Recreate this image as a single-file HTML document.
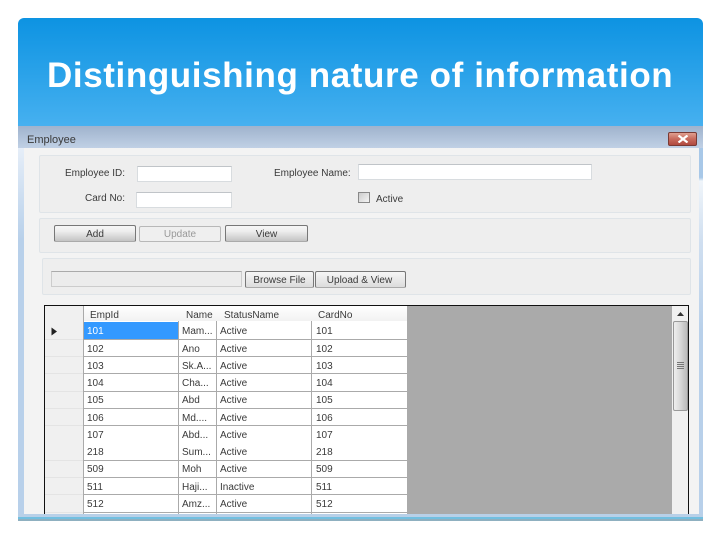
<!DOCTYPE html>
<html><head><meta charset="utf-8"><style>
html,body{margin:0;padding:0;background:#fff}
body{width:720px;height:540px;position:relative;overflow:hidden;font-family:"Liberation Sans",sans-serif}
div{position:absolute;box-sizing:border-box}
.t{font-size:10px;line-height:12px;color:#3a3a3a;white-space:nowrap;filter:blur(.35px)}
.p{background:#eee;border:1px solid #dfe4e8;border-radius:2px}
.i{background:#fff;border:1px solid #d8dcdf;border-top-color:#c0c4c8}
.b{height:17px;border:1px solid #777;border-bottom-color:#aaa;border-radius:2px;background:linear-gradient(#f6f6f6,#eee 35%,#c4c4c4);text-align:center;font-size:10px;line-height:17px;color:#3a3a3a}
.h{background:#aaa;height:1px}
.v{background:#aaa;width:1px}
</style></head><body>
<div style="left:18px;top:18px;width:685px;height:110px;border-radius:6px 6px 0 0;background:linear-gradient(#0d93e2,#47b1f0)"></div>
<div style="left:18px;top:126px;width:685px;height:22px;background:linear-gradient(#9fb3cd,#c0d0e5)"></div>
<div style="left:18px;top:148px;width:6px;height:368px;background:linear-gradient(#e6eef8,#c4d8ee 18%,#b8d0ea 25%,#b8d0ea)"></div>
<div style="left:699px;top:148px;width:4px;height:368px;background:linear-gradient(#a8c8e8,#a8c8e8 8%,#f0f5fa 9%,#d0dff0 25%,#b8d0ea 50%,#b8d0ea)"></div>
<div style="left:24px;top:148px;width:675px;height:368px;background:#f3f3f3"></div>
<div style="left:18px;top:514px;width:685px;height:3px;background:#b8d0e8"></div>
<div style="left:18px;top:517px;width:685px;height:2px;background:#72bfe0"></div>
<div style="left:18px;top:519px;width:685px;height:2px;background:#8fb0c0"></div>

<div style="left:47px;top:55px;width:640px;font-family:'Liberation Sans',sans-serif;font-weight:bold;font-size:35px;line-height:42px;color:#fff;white-space:nowrap;letter-spacing:.6px;filter:blur(.25px)">Distinguishing nature of information</div>

<div class="t" style="left:27px;top:134px;font-size:11px">Employee</div>
<div style="left:668px;top:132px;width:29px;height:14px;border:1px solid #7a3a34;border-radius:2px;background:linear-gradient(#e0a090,#c86a5c 50%,#b04a40)"></div>
<svg style="position:absolute;left:677px;top:135px" width="12" height="8"><path d="M1.5 .5 L10.5 7.5 M10.5 .5 L1.5 7.5" stroke="#fff" stroke-width="2.2"/></svg>

<div class="p" style="left:39px;top:155px;width:652px;height:58px"></div>
<div class="p" style="left:39px;top:218px;width:652px;height:35px"></div>
<div class="p" style="left:42px;top:258px;width:649px;height:37px"></div>

<div class="t" style="left:65px;top:168px">Employee ID:</div>
<div class="i" style="left:137px;top:166px;width:95px;height:16px"></div>
<div class="t" style="left:274px;top:168px">Employee Name:</div>
<div class="i" style="left:358px;top:164px;width:234px;height:16px"></div>
<div class="t" style="left:85px;top:193px">Card No:</div>
<div class="i" style="left:136px;top:192px;width:96px;height:16px"></div>
<div style="left:358px;top:192px;width:12px;height:11px;border:1px solid #888;background:linear-gradient(135deg,#ccc,#f4f4f4)"></div>
<div class="t" style="left:376px;top:194px">Active</div>

<div class="b" style="left:54px;top:225px;width:82px">Add</div>
<div class="b" style="left:139px;top:226px;width:82px;height:16px;background:#efefef;border-color:#b8b8b8;color:#999;line-height:16px">Update</div>
<div class="b" style="left:225px;top:225px;width:83px">View</div>

<div style="left:51px;top:271px;width:191px;height:16px;background:#ececec;border:1px solid #ccc;border-top-color:#aaa"></div>
<div class="b" style="left:245px;top:271px;width:69px;background:linear-gradient(#f6f6f6,#dcdcdc)">Browse File</div>
<div class="b" style="left:315px;top:271px;width:91px;padding-right:2px;background:linear-gradient(#f6f6f6,#dcdcdc)">Upload &amp; View</div>

<!-- grid -->
<div style="left:44px;top:305px;width:645px;height:209px;background:#f0f0f0;border:1px solid #111;border-bottom:0;border-width:1px 1px 0 1px"></div>
<div style="left:83px;top:306px;width:324px;height:15px;background:linear-gradient(#fff,#f2f2f2)"></div>
<div style="left:83px;top:321px;width:324px;height:193px;background:#fff"></div>
<div style="left:84px;top:322px;width:94px;height:17px;background:#3399ff"></div>
<div style="left:407px;top:306px;width:265px;height:208px;background:#aaa"></div>

<div class="h" style="left:45px;top:339px;width:362px;background:#e4e4e4"></div>
<div class="h" style="left:45px;top:356px;width:362px;background:#e4e4e4"></div>
<div class="h" style="left:45px;top:373px;width:362px;background:#e4e4e4"></div>
<div class="h" style="left:45px;top:391px;width:362px;background:#e4e4e4"></div>
<div class="h" style="left:45px;top:408px;width:362px;background:#e4e4e4"></div>
<div class="h" style="left:45px;top:425px;width:362px;background:#e4e4e4"></div>
<div class="h" style="left:45px;top:460px;width:362px;background:#e4e4e4"></div>
<div class="h" style="left:45px;top:477px;width:362px;background:#e4e4e4"></div>
<div class="h" style="left:45px;top:494px;width:362px;background:#e4e4e4"></div>
<div class="h" style="left:45px;top:512px;width:362px;background:#e4e4e4"></div>

<div class="h" style="left:83px;top:339px;width:324px"></div>
<div class="h" style="left:83px;top:356px;width:324px"></div>
<div class="h" style="left:83px;top:373px;width:324px"></div>
<div class="h" style="left:83px;top:391px;width:324px"></div>
<div class="h" style="left:83px;top:408px;width:324px"></div>
<div class="h" style="left:83px;top:425px;width:324px"></div>
<div class="h" style="left:83px;top:460px;width:324px"></div>
<div class="h" style="left:83px;top:477px;width:324px"></div>
<div class="h" style="left:83px;top:494px;width:324px"></div>
<div class="h" style="left:83px;top:512px;width:324px"></div>

<div class="v" style="left:83px;top:306px;height:208px"></div>
<div class="v" style="left:178px;top:321px;height:193px"></div>
<div class="v" style="left:216px;top:321px;height:193px"></div>
<div class="v" style="left:311px;top:321px;height:193px"></div>

<div class="t" style="left:90px;top:310px">EmpId</div>
<div class="t" style="left:186px;top:310px">Name</div>
<div class="t" style="left:224px;top:310px">StatusName</div>
<div class="t" style="left:318px;top:310px">CardNo</div>

<svg style="position:absolute;left:51px;top:327px" width="7" height="9"><path d="M0.5 0.5 L6 4.5 L0.5 8.5 Z" fill="#222"/></svg>

<div class="t" style="left:87px;top:326px;color:#fff">101</div><div class="t" style="left:182px;top:326px">Mam...</div><div class="t" style="left:220px;top:326px">Active</div><div class="t" style="left:316px;top:326px">101</div>
<div class="t" style="left:87px;top:344px">102</div><div class="t" style="left:182px;top:344px">Ano</div><div class="t" style="left:220px;top:344px">Active</div><div class="t" style="left:316px;top:344px">102</div>
<div class="t" style="left:87px;top:361px">103</div><div class="t" style="left:182px;top:361px">Sk.A...</div><div class="t" style="left:220px;top:361px">Active</div><div class="t" style="left:316px;top:361px">103</div>
<div class="t" style="left:87px;top:378px">104</div><div class="t" style="left:182px;top:378px">Cha...</div><div class="t" style="left:220px;top:378px">Active</div><div class="t" style="left:316px;top:378px">104</div>
<div class="t" style="left:87px;top:395px">105</div><div class="t" style="left:182px;top:395px">Abd</div><div class="t" style="left:220px;top:395px">Active</div><div class="t" style="left:316px;top:395px">105</div>
<div class="t" style="left:87px;top:413px">106</div><div class="t" style="left:182px;top:413px">Md....</div><div class="t" style="left:220px;top:413px">Active</div><div class="t" style="left:316px;top:413px">106</div>
<div class="t" style="left:87px;top:430px">107</div><div class="t" style="left:182px;top:430px">Abd...</div><div class="t" style="left:220px;top:430px">Active</div><div class="t" style="left:316px;top:430px">107</div>
<div class="t" style="left:87px;top:447px">218</div><div class="t" style="left:182px;top:447px">Sum...</div><div class="t" style="left:220px;top:447px">Active</div><div class="t" style="left:316px;top:447px">218</div>
<div class="t" style="left:87px;top:464px">509</div><div class="t" style="left:182px;top:464px">Moh</div><div class="t" style="left:220px;top:464px">Active</div><div class="t" style="left:316px;top:464px">509</div>
<div class="t" style="left:87px;top:482px">511</div><div class="t" style="left:182px;top:482px">Haji...</div><div class="t" style="left:220px;top:482px">Inactive</div><div class="t" style="left:316px;top:482px">511</div>
<div class="t" style="left:87px;top:499px">512</div><div class="t" style="left:182px;top:499px">Amz...</div><div class="t" style="left:220px;top:499px">Active</div><div class="t" style="left:316px;top:499px">512</div>

<!-- scrollbar -->
<div style="left:672px;top:306px;width:16px;height:208px;background:#f0f0f0"></div>
<svg style="position:absolute;left:676px;top:311px" width="9" height="6"><path d="M1 5 L4.5 1 L8 5 Z" fill="#333"/></svg>
<div style="left:673px;top:321px;width:15px;height:90px;border:1px solid #999;border-radius:2px;background:linear-gradient(90deg,#eee,#d8d8d8 50%,#bbb)"></div>
<svg style="position:absolute;left:676px;top:361px" width="9" height="9"><path d="M1 1.5H8M1 3.5H8M1 5.5H8M1 7.5H8" stroke="#777" stroke-width="1"/></svg>
</body></html>
